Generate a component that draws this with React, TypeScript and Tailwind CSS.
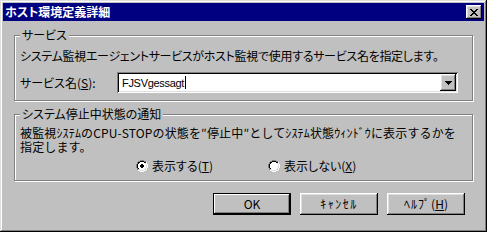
import React from "react";

const font = "font-['MS_UI_Gothic','Noto_Sans_CJK_JP',sans-serif] [font-feature-settings:'palt'] text-[12px] text-black";

const raised =
  "bg-[#c0c0c0] shadow-[inset_-1px_-1px_#000,inset_1px_1px_#fff,inset_-2px_-2px_#808080,inset_2px_2px_#dfdfdf]";

function GroupBox({
  title,
  className,
  children,
}: {
  title: string;
  className: string;
  children: React.ReactNode;
}) {
  return (
    <div
      className={`relative border border-[#808080] shadow-[inset_1px_1px_#fff,1px_1px_#fff] ${className}`}
    >
      <span className="absolute -top-[8px] left-[5px] bg-[#c0c0c0] px-[2px] leading-[14px]">
        {title}
      </span>
      {children}
    </div>
  );
}

function Radio({ checked, label, mnemonic }: { checked: boolean; label: string; mnemonic: string }) {
  return (
    <label className="flex items-center gap-[4px]">
      <span className="relative w-[12px] h-[12px]">
        <svg width="12" height="12" viewBox="0 0 12 12" shapeRendering="crispEdges">
          <path d="M4 0h4v1H4zM2 1h2v1H2zM8 1h2v1H8zM1 2h1v2H1zM0 4h1v4H0zM1 8h1v2H1z" fill="#808080" />
          <path d="M4 1h4v1H4zM2 2h2v1H2zM8 2h2v1H8zM2 3h1v1H2zM1 4h1v4H1zM2 8h1v1H2z" fill="#000" />
          <path d="M10 2h1v2h-1zM11 4h1v4h-1zM10 8h1v2h-1zM8 10h2v1H8zM2 10h2v1H2zM4 11h4v1H4z" fill="#fff" />
          <path d="M9 3h1v1H9zM10 4h1v4h-1zM9 8h1v1H9zM8 9h1v1H8zM3 9h1v1H3zM4 10h4v1H4z" fill="#dfdfdf" />
          <path d="M4 2h4v1H4zM3 3h6v1H3zM2 4h8v4H2zM3 8h6v1H3zM4 9h4v1H4z" fill="#fff" />
          {checked && <path d="M5 4h2v1H5zM4 5h4v2H4zM5 7h2v1H5z" fill="#000" />}
        </svg>
      </span>
      <span className="leading-[14px]">
        {label}(<span className="underline">{mnemonic}</span>)
      </span>
    </label>
  );
}

function Button({ children, isDefault }: { children: React.ReactNode; isDefault?: boolean }) {
  return (
    <button
      type="button"
      className={`w-[78px] h-[22px] flex items-center justify-center ${
        isDefault
          ? "bg-[#c0c0c0] shadow-[inset_0_0_0_1px_#000,inset_-2px_-2px_#000,inset_2px_2px_#fff,inset_-3px_-3px_#808080]"
          : raised
      }`}
    >
      {children}
    </button>
  );
}

export default function App() {
  return (
    <div className={`w-[487px] h-[232px] bg-[#c0c0c0] p-[3px] shadow-[inset_-1px_-1px_#000,inset_1px_1px_#dfdfdf,inset_-2px_-2px_#808080,inset_2px_2px_#fff] ${font}`}>
      <div className="h-[18px] bg-[#000080] flex items-center justify-between pl-[2px] pr-[2px]">
        <span className="text-white font-bold text-[12px] leading-[14px]">ホスト環境定義詳細</span>
        <button type="button" className={`w-[16px] h-[14px] flex items-center justify-center ${raised}`}>
          <svg width="8" height="7" viewBox="0 0 8 7" shapeRendering="crispEdges">
            <path d="M0 0h2v1h1v1h2V1h1V0h2v1H7v1H6v1H5v1h1v1h1v1h1v1H6V6H5V5H3v1H2v1H0V6h1V5h1V4h1V3H2V2H1V1H0z" fill="#000" />
          </svg>
        </button>
      </div>

      <div className="flex flex-col px-[11px] pt-[14px]">
        <GroupBox title="サービス" className="h-[66px] flex flex-col pl-[5px] pr-[14px] pt-[13px]">
          <p className="leading-[14px] tracking-[-0.3px] whitespace-nowrap">
            システム監視エージェントサービスがホスト監視で使用するサービス名を指定します。
          </p>
          <div className="flex items-center mt-[9px]">
            <span className="w-[97px] leading-[14px]">
              サービス名(<span className="underline">S</span>):
            </span>
            <div className="flex-1 h-[21px] bg-white flex items-center justify-between pl-[5px] pr-[2px] shadow-[inset_1px_1px_#808080,inset_-1px_-1px_#fff,inset_2px_2px_#000,inset_-2px_-2px_#dfdfdf]">
              <span className="flex items-center leading-[14px] font-['Liberation_Sans',sans-serif] text-[11px] tracking-[-0.3px]">
                FJSVgessagt
                <span className="inline-block w-[1px] h-[13px] bg-black ml-[1px]" />
              </span>
              <span className={`w-[16px] h-[17px] flex items-center justify-center ${raised}`}>
                <svg width="7" height="4" viewBox="0 0 7 4" shapeRendering="crispEdges">
                  <path d="M0 0h7v1H6v1H5v1H4v1H3V3H2V2H1V1H0z" fill="#000" />
                </svg>
              </span>
            </div>
          </div>
        </GroupBox>

        <GroupBox title="システム停止中状態の通知" className="mt-[13px] h-[67px] flex flex-col pl-[5px] pr-[10px] pt-[11px]">
          <div className="flex flex-col whitespace-nowrap [font-feature-settings:normal] tracking-[0.15px]">
            <span className="leading-[14px]">
              被監視ｼｽﾃﾑのCPU-STOPの状態を″停止中″としてｼｽﾃﾑ状態ｳｨﾝﾄﾞｳに表示するかを
            </span>
            <span className="leading-[14px]">指定します。</span>
          </div>
          <div className="flex mt-[5px] pl-[116px]">
            <div className="w-[132px]">
              <Radio checked label="表示する" mnemonic="T" />
            </div>
            <Radio checked={false} label="表示しない" mnemonic="X" />
          </div>
        </GroupBox>

        <div className="flex justify-end gap-[9px] mt-[12px] pr-[8px]">
          <Button isDefault>OK</Button>
          <Button>
            <span className="tracking-[1.5px]">ｷｬﾝｾﾙ</span>
          </Button>
          <Button>
            <span className="tracking-[1px]">ﾍﾙﾌﾟ</span>(<span className="underline">H</span>)
          </Button>
        </div>
      </div>
    </div>
  );
}
